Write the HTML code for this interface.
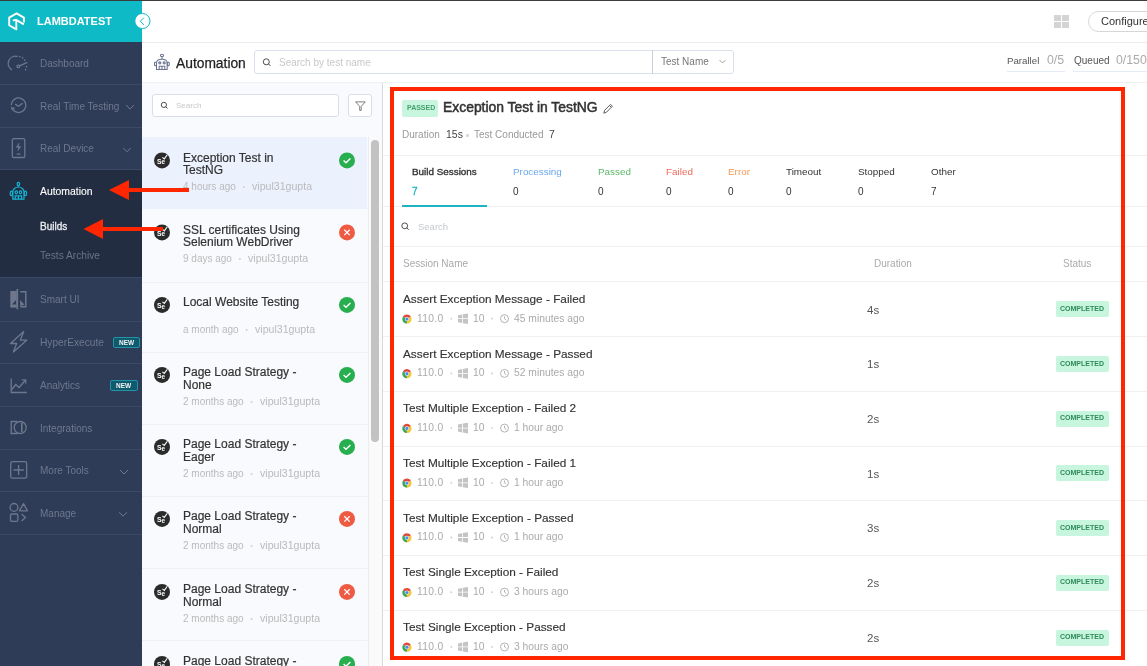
<!DOCTYPE html><html><head><meta charset="utf-8"><style>
html,body{margin:0;padding:0;}
body{width:1147px;height:666px;overflow:hidden;position:relative;background:#fff;font-family:"Liberation Sans", sans-serif;}
.t{position:absolute;white-space:nowrap;line-height:1;}
svg{position:absolute;left:0;top:0;}
body>div{will-change:transform;}
</style></head><body>
<div style="position:absolute;left:0px;top:0px;width:1147px;height:1px;background:#3c3c3c"></div><div style="position:absolute;left:0px;top:1px;width:142px;height:41px;background:#0ebac5"></div><div style="position:absolute;left:0px;top:42px;width:142px;height:624px;background:#2f3c58"></div><div style="position:absolute;left:0px;top:169px;width:142px;height:109px;background:#222d41"></div><div style="position:absolute;left:0px;top:84px;width:142px;height:1px;background:#3d4966"></div><div style="position:absolute;left:0px;top:127px;width:142px;height:1px;background:#3d4966"></div><div style="position:absolute;left:0px;top:169px;width:142px;height:1px;background:#3d4966"></div><div style="position:absolute;left:0px;top:277px;width:142px;height:1px;background:#3d4966"></div><div style="position:absolute;left:0px;top:321px;width:142px;height:1px;background:#3d4966"></div><div style="position:absolute;left:0px;top:363px;width:142px;height:1px;background:#3d4966"></div><div style="position:absolute;left:0px;top:406px;width:142px;height:1px;background:#3d4966"></div><div style="position:absolute;left:0px;top:449px;width:142px;height:1px;background:#3d4966"></div><div style="position:absolute;left:0px;top:491px;width:142px;height:1px;background:#3d4966"></div><div style="position:absolute;left:0px;top:534px;width:142px;height:1px;background:#3d4966"></div><div style="position:absolute;left:142px;top:42px;width:1005px;height:1px;background:#ececec"></div><div style="position:absolute;left:142px;top:82px;width:1005px;height:1px;background:#eef0f4"></div><div style="position:absolute;left:142px;top:83px;width:240px;height:583px;background:#f9fafd"></div><div style="position:absolute;left:382px;top:83px;width:1px;height:583px;background:#d5d8dc"></div><div class="t" style="left:37px;top:16px;font-size:11px;color:#fff;font-weight:bold;">LAMBDATEST</div><div class="t" style="left:40px;top:59px;font-size:10px;color:#6e778c;font-weight:normal;">Dashboard</div><div class="t" style="left:40px;top:102px;font-size:10px;color:#6e778c;font-weight:normal;">Real Time Testing</div><div class="t" style="left:40px;top:144px;font-size:10px;color:#6e778c;font-weight:normal;">Real Device</div><div class="t" style="left:40px;top:187px;font-size:10.4px;color:#ffffff;font-weight:normal;-webkit-text-stroke:0.1px #fff">Automation</div><div class="t" style="left:39.8px;top:222px;font-size:10px;color:#ebedf0;font-weight:normal;-webkit-text-stroke:0.3px #ebedf0">Builds</div><div class="t" style="left:39.8px;top:251px;font-size:10.2px;color:#6a7386;font-weight:normal;">Tests Archive</div><div class="t" style="left:40px;top:295px;font-size:10px;color:#6e778c;font-weight:normal;">Smart UI</div><div class="t" style="left:40px;top:338px;font-size:10.2px;color:#6e778c;font-weight:normal;">HyperExecute</div><div class="t" style="left:40px;top:381px;font-size:10px;color:#6e778c;font-weight:normal;">Analytics</div><div class="t" style="left:40px;top:424px;font-size:10px;color:#6e778c;font-weight:normal;">Integrations</div><div class="t" style="left:40px;top:466px;font-size:10px;color:#6e778c;font-weight:normal;">More Tools</div><div class="t" style="left:40px;top:509px;font-size:10px;color:#6e778c;font-weight:normal;">Manage</div><div style="position:absolute;left:113px;top:337px;width:27px;height:10.7px;background:#0f5a6d;border:1px solid #2393a5;box-sizing:border-box;border-radius:2px"></div><div class="t" style="left:118.6px;top:340px;font-size:6.5px;color:#f2f4f6;font-weight:bold;">NEW</div><div style="position:absolute;left:110px;top:380px;width:28px;height:10.7px;background:#0f5a6d;border:1px solid #2393a5;box-sizing:border-box;border-radius:2px"></div><div class="t" style="left:116.1px;top:383px;font-size:6.5px;color:#f2f4f6;font-weight:bold;">NEW</div><div style="position:absolute;left:1054px;top:15px;width:6.5px;height:6px;background:#d4d4d4"></div><div style="position:absolute;left:1061.5px;top:15px;width:6.5px;height:6px;background:#d4d4d4"></div><div style="position:absolute;left:1054px;top:22px;width:6.5px;height:6px;background:#d4d4d4"></div><div style="position:absolute;left:1061.5px;top:22px;width:6.5px;height:6px;background:#d4d4d4"></div><div style="position:absolute;left:1088px;top:11px;width:80px;height:21px;border:1px solid #d6d6d6;border-radius:11px;box-sizing:border-box;background:#fff"></div><div class="t" style="left:1101px;top:16px;font-size:11px;color:#333;font-weight:normal;">Configure</div><div class="t" style="left:175.5px;top:57px;font-size:13.8px;color:#222;font-weight:normal;-webkit-text-stroke:0.25px #222">Automation</div><div style="position:absolute;left:254px;top:50px;width:480px;height:24px;border:1px solid #d9dfeb;border-radius:3px;box-sizing:border-box;background:#fff"></div><div style="position:absolute;left:652px;top:50px;width:1px;height:24px;background:#c9ced8"></div><div class="t" style="left:278.8px;top:58px;font-size:10px;color:#c8c8c8;font-weight:normal;">Search by test name</div><div class="t" style="left:661.4px;top:57px;font-size:10px;color:#777;font-weight:normal;">Test Name</div><div class="t" style="left:1007.4px;top:56px;font-size:9.7px;color:#555;font-weight:normal;">Parallel</div><div class="t" style="left:1047.4px;top:54px;font-size:12.3px;color:#aaa;font-weight:normal;">0/5</div><div style="position:absolute;left:1007px;top:70.5px;width:58px;height:1px;background:#e6ebf8"></div><div class="t" style="left:1073.7px;top:56px;font-size:10px;color:#555;font-weight:normal;">Queued</div><div class="t" style="left:1116px;top:54px;font-size:12.3px;color:#aaa;font-weight:normal;">0/150</div><div style="position:absolute;left:1073px;top:70.5px;width:74px;height:1px;background:#e6ebf8"></div><div style="position:absolute;left:152px;top:94px;width:187px;height:23px;border:1px solid #d7dde9;border-radius:3px;box-sizing:border-box;background:#fff"></div><div class="t" style="left:175.7px;top:102px;font-size:8px;color:#c8c8c8;font-weight:normal;">Search</div><div style="position:absolute;left:348px;top:94px;width:24px;height:23px;border:1px solid #d7dde9;border-radius:3px;box-sizing:border-box;background:#fff"></div><div style="position:absolute;left:142px;top:137px;width:225px;height:71.5px;background:#ebf2fe"></div><div class="t" style="left:183.3px;top:152px;font-size:12px;color:#333;font-weight:normal;-webkit-text-stroke:0.2px #333">Exception Test in</div><div class="t" style="left:183.3px;top:164px;font-size:12px;color:#333;font-weight:normal;-webkit-text-stroke:0.2px #333">TestNG</div><div class="t" style="left:183.3px;top:182px;font-size:10px;color:#bababa;font-weight:normal;">4 hours ago</div><div class="t" style="left:252.10000000000002px;top:181px;font-size:10.6px;color:#bababa;font-weight:normal;">vipul31gupta</div><div style="position:absolute;left:142px;top:282px;width:225px;height:1px;background:#eef0f3"></div><div class="t" style="left:183.3px;top:224px;font-size:12px;color:#333;font-weight:normal;-webkit-text-stroke:0.2px #333">SSL certificates Using</div><div class="t" style="left:183.3px;top:236px;font-size:12px;color:#333;font-weight:normal;-webkit-text-stroke:0.2px #333">Selenium WebDriver</div><div class="t" style="left:183.3px;top:254px;font-size:10px;color:#bababa;font-weight:normal;">9 days ago</div><div class="t" style="left:248.20000000000002px;top:253px;font-size:10.6px;color:#bababa;font-weight:normal;">vipul31gupta</div><div style="position:absolute;left:142px;top:352px;width:225px;height:1px;background:#eef0f3"></div><div class="t" style="left:183.3px;top:296px;font-size:12px;color:#333;font-weight:normal;-webkit-text-stroke:0.2px #333">Local Website Testing</div><div class="t" style="left:183.3px;top:325px;font-size:10px;color:#bababa;font-weight:normal;">a month ago</div><div class="t" style="left:254.9px;top:324px;font-size:10.6px;color:#bababa;font-weight:normal;">vipul31gupta</div><div style="position:absolute;left:142px;top:424px;width:225px;height:1px;background:#eef0f3"></div><div class="t" style="left:183.3px;top:366px;font-size:12px;color:#333;font-weight:normal;-webkit-text-stroke:0.2px #333">Page Load Strategy -</div><div class="t" style="left:183.3px;top:379px;font-size:12px;color:#333;font-weight:normal;-webkit-text-stroke:0.2px #333">None</div><div class="t" style="left:183.3px;top:397px;font-size:10px;color:#bababa;font-weight:normal;">2 months ago</div><div class="t" style="left:259.9px;top:396px;font-size:10.6px;color:#bababa;font-weight:normal;">vipul31gupta</div><div style="position:absolute;left:142px;top:496px;width:225px;height:1px;background:#eef0f3"></div><div class="t" style="left:183.3px;top:438px;font-size:12px;color:#333;font-weight:normal;-webkit-text-stroke:0.2px #333">Page Load Strategy -</div><div class="t" style="left:183.3px;top:451px;font-size:12px;color:#333;font-weight:normal;-webkit-text-stroke:0.2px #333">Eager</div><div class="t" style="left:183.3px;top:469px;font-size:10px;color:#bababa;font-weight:normal;">2 months ago</div><div class="t" style="left:259.9px;top:468px;font-size:10.6px;color:#bababa;font-weight:normal;">vipul31gupta</div><div style="position:absolute;left:142px;top:568px;width:225px;height:1px;background:#eef0f3"></div><div class="t" style="left:183.3px;top:510px;font-size:12px;color:#333;font-weight:normal;-webkit-text-stroke:0.2px #333">Page Load Strategy -</div><div class="t" style="left:183.3px;top:523px;font-size:12px;color:#333;font-weight:normal;-webkit-text-stroke:0.2px #333">Normal</div><div class="t" style="left:183.3px;top:541px;font-size:10px;color:#bababa;font-weight:normal;">2 months ago</div><div class="t" style="left:259.9px;top:540px;font-size:10.6px;color:#bababa;font-weight:normal;">vipul31gupta</div><div style="position:absolute;left:142px;top:640px;width:225px;height:1px;background:#eef0f3"></div><div class="t" style="left:183.3px;top:583px;font-size:12px;color:#333;font-weight:normal;-webkit-text-stroke:0.2px #333">Page Load Strategy -</div><div class="t" style="left:183.3px;top:596px;font-size:12px;color:#333;font-weight:normal;-webkit-text-stroke:0.2px #333">Normal</div><div class="t" style="left:183.3px;top:614px;font-size:10px;color:#bababa;font-weight:normal;">2 months ago</div><div class="t" style="left:259.9px;top:613px;font-size:10.6px;color:#bababa;font-weight:normal;">vipul31gupta</div><div style="position:absolute;left:142px;top:713px;width:225px;height:1px;background:#eef0f3"></div><div class="t" style="left:183.3px;top:655px;font-size:12px;color:#333;font-weight:normal;-webkit-text-stroke:0.2px #333">Page Load Strategy -</div><div class="t" style="left:183.3px;top:668px;font-size:12px;color:#333;font-weight:normal;-webkit-text-stroke:0.2px #333">Normal</div><div class="t" style="left:183.3px;top:686px;font-size:10px;color:#bababa;font-weight:normal;">2 months ago</div><div class="t" style="left:259.9px;top:685px;font-size:10.6px;color:#bababa;font-weight:normal;">vipul31gupta</div><div style="position:absolute;left:368px;top:137px;width:14px;height:529px;background:#fafafa;border-left:1px solid #ececec;box-sizing:border-box"></div><div style="position:absolute;left:371px;top:140px;width:8px;height:302px;background:#c2c2c2;border-radius:4px"></div><div style="position:absolute;left:383px;top:155px;width:764px;height:1px;background:#eef0f4"></div><div style="position:absolute;left:383px;top:206px;width:764px;height:1px;background:#eef0f4"></div><div style="position:absolute;left:383px;top:246px;width:764px;height:1px;background:#eef0f4"></div><div style="position:absolute;left:383px;top:281px;width:764px;height:1px;background:#eef0f4"></div><div style="position:absolute;left:402px;top:100px;width:36px;height:16.5px;background:#c7f5dd;border-radius:2px"></div><div class="t" style="left:406.6px;top:104px;font-size:7px;color:#449f6c;font-weight:bold;">PASSED</div><div class="t" style="left:442.5px;top:101px;font-size:13.9px;color:#333;font-weight:normal;-webkit-text-stroke:0.5px #333">Exception Test in TestNG</div><div class="t" style="left:402px;top:130px;font-size:10px;color:#999;font-weight:normal;">Duration</div><div class="t" style="left:445.5px;top:129px;font-size:10.5px;color:#444;font-weight:normal;">15s</div><div style="position:absolute;left:465.5px;top:133.5px;width:3px;height:3px;background:#d6d8dc;border-radius:1px"></div><div class="t" style="left:473.5px;top:130px;font-size:10px;color:#999;font-weight:normal;">Test Conducted</div><div class="t" style="left:549px;top:129px;font-size:10.5px;color:#444;font-weight:normal;">7</div><div class="t" style="left:412px;top:167px;font-size:9.9px;color:#333;font-weight:normal;-webkit-text-stroke:0.35px #333">Build Sessions</div><div class="t" style="left:412px;top:187px;font-size:10px;color:#1fb4c4;font-weight:normal;-webkit-text-stroke:0.3px #1fb4c4">7</div><div class="t" style="left:512.6px;top:167px;font-size:9.9px;color:#6aa8ea;font-weight:normal;">Processing</div><div class="t" style="left:512.6px;top:187px;font-size:10px;color:#333;font-weight:normal;">0</div><div class="t" style="left:597.6px;top:167px;font-size:9.9px;color:#5cb86a;font-weight:normal;">Passed</div><div class="t" style="left:597.6px;top:187px;font-size:10px;color:#333;font-weight:normal;">0</div><div class="t" style="left:665.8px;top:167px;font-size:9.9px;color:#ef6b5c;font-weight:normal;">Failed</div><div class="t" style="left:665.8px;top:187px;font-size:10px;color:#333;font-weight:normal;">0</div><div class="t" style="left:728.3px;top:167px;font-size:9.9px;color:#f39a58;font-weight:normal;">Error</div><div class="t" style="left:728.3px;top:187px;font-size:10px;color:#333;font-weight:normal;">0</div><div class="t" style="left:785.8px;top:167px;font-size:9.9px;color:#333;font-weight:normal;">Timeout</div><div class="t" style="left:785.8px;top:187px;font-size:10px;color:#333;font-weight:normal;">0</div><div class="t" style="left:857.8px;top:167px;font-size:9.9px;color:#333;font-weight:normal;">Stopped</div><div class="t" style="left:857.8px;top:187px;font-size:10px;color:#333;font-weight:normal;">0</div><div class="t" style="left:931.3px;top:167px;font-size:9.9px;color:#333;font-weight:normal;">Other</div><div class="t" style="left:931.3px;top:187px;font-size:10px;color:#333;font-weight:normal;">7</div><div style="position:absolute;left:402px;top:205px;width:85px;height:2px;background:#1fb4c4"></div><div class="t" style="left:417.6px;top:222px;font-size:9.5px;color:#c5c8ce;font-weight:normal;">Search</div><div class="t" style="left:402.8px;top:259px;font-size:10px;color:#aaa;font-weight:normal;">Session Name</div><div class="t" style="left:874.4px;top:259px;font-size:10px;color:#aaa;font-weight:normal;">Duration</div><div class="t" style="left:1062.9px;top:259px;font-size:10px;color:#aaa;font-weight:normal;">Status</div><div class="t" style="left:402.5px;top:294px;font-size:11.8px;color:#333;font-weight:normal;-webkit-text-stroke:0.15px #333">Assert Exception Message - Failed</div><div class="t" style="left:416.7px;top:314px;font-size:10.3px;color:#aaa;font-weight:normal;letter-spacing:0.3px">110.0</div><div class="t" style="left:472.7px;top:314px;font-size:10.3px;color:#aaa;font-weight:normal;">10</div><div class="t" style="left:513.6px;top:314px;font-size:10.3px;color:#aaa;font-weight:normal;">45 minutes ago</div><div class="t" style="left:866.6px;top:305px;font-size:11.5px;color:#555;font-weight:normal;">4s</div><div style="position:absolute;left:1056.3px;top:301.3px;width:52.5px;height:16px;background:#c7f5dd;border-radius:2px"></div><div class="t" style="left:1060.3px;top:305px;font-size:7px;color:#2e8a5a;font-weight:bold;">COMPLETED</div><div style="position:absolute;left:383px;top:336px;width:764px;height:1px;background:#eef0f4"></div><div class="t" style="left:402.5px;top:349px;font-size:11.8px;color:#333;font-weight:normal;-webkit-text-stroke:0.15px #333">Assert Exception Message - Passed</div><div class="t" style="left:416.7px;top:368px;font-size:10.3px;color:#aaa;font-weight:normal;letter-spacing:0.3px">110.0</div><div class="t" style="left:472.7px;top:368px;font-size:10.3px;color:#aaa;font-weight:normal;">10</div><div class="t" style="left:513.6px;top:368px;font-size:10.3px;color:#aaa;font-weight:normal;">52 minutes ago</div><div class="t" style="left:866.6px;top:359px;font-size:11.5px;color:#555;font-weight:normal;">1s</div><div style="position:absolute;left:1056.3px;top:356.0px;width:52.5px;height:16px;background:#c7f5dd;border-radius:2px"></div><div class="t" style="left:1060.3px;top:360px;font-size:7px;color:#2e8a5a;font-weight:bold;">COMPLETED</div><div style="position:absolute;left:383px;top:391px;width:764px;height:1px;background:#eef0f4"></div><div class="t" style="left:402.5px;top:403px;font-size:11.8px;color:#333;font-weight:normal;-webkit-text-stroke:0.15px #333">Test Multiple Exception - Failed 2</div><div class="t" style="left:416.7px;top:423px;font-size:10.3px;color:#aaa;font-weight:normal;letter-spacing:0.3px">110.0</div><div class="t" style="left:472.7px;top:423px;font-size:10.3px;color:#aaa;font-weight:normal;">10</div><div class="t" style="left:513.6px;top:423px;font-size:10.3px;color:#aaa;font-weight:normal;">1 hour ago</div><div class="t" style="left:866.6px;top:414px;font-size:11.5px;color:#555;font-weight:normal;">2s</div><div style="position:absolute;left:1056.3px;top:410.7px;width:52.5px;height:16px;background:#c7f5dd;border-radius:2px"></div><div class="t" style="left:1060.3px;top:414px;font-size:7px;color:#2e8a5a;font-weight:bold;">COMPLETED</div><div style="position:absolute;left:383px;top:446px;width:764px;height:1px;background:#eef0f4"></div><div class="t" style="left:402.5px;top:458px;font-size:11.8px;color:#333;font-weight:normal;-webkit-text-stroke:0.15px #333">Test Multiple Exception - Failed 1</div><div class="t" style="left:416.7px;top:478px;font-size:10.3px;color:#aaa;font-weight:normal;letter-spacing:0.3px">110.0</div><div class="t" style="left:472.7px;top:478px;font-size:10.3px;color:#aaa;font-weight:normal;">10</div><div class="t" style="left:513.6px;top:478px;font-size:10.3px;color:#aaa;font-weight:normal;">1 hour ago</div><div class="t" style="left:866.6px;top:469px;font-size:11.5px;color:#555;font-weight:normal;">1s</div><div style="position:absolute;left:1056.3px;top:465.40000000000003px;width:52.5px;height:16px;background:#c7f5dd;border-radius:2px"></div><div class="t" style="left:1060.3px;top:469px;font-size:7px;color:#2e8a5a;font-weight:bold;">COMPLETED</div><div style="position:absolute;left:383px;top:500px;width:764px;height:1px;background:#eef0f4"></div><div class="t" style="left:402.5px;top:513px;font-size:11.8px;color:#333;font-weight:normal;-webkit-text-stroke:0.15px #333">Test Multiple Exception - Passed</div><div class="t" style="left:416.7px;top:532px;font-size:10.3px;color:#aaa;font-weight:normal;letter-spacing:0.3px">110.0</div><div class="t" style="left:472.7px;top:532px;font-size:10.3px;color:#aaa;font-weight:normal;">10</div><div class="t" style="left:513.6px;top:532px;font-size:10.3px;color:#aaa;font-weight:normal;">1 hour ago</div><div class="t" style="left:866.6px;top:523px;font-size:11.5px;color:#555;font-weight:normal;">3s</div><div style="position:absolute;left:1056.3px;top:520.1px;width:52.5px;height:16px;background:#c7f5dd;border-radius:2px"></div><div class="t" style="left:1060.3px;top:524px;font-size:7px;color:#2e8a5a;font-weight:bold;">COMPLETED</div><div style="position:absolute;left:383px;top:555px;width:764px;height:1px;background:#eef0f4"></div><div class="t" style="left:402.5px;top:567px;font-size:11.8px;color:#333;font-weight:normal;-webkit-text-stroke:0.15px #333">Test Single Exception - Failed</div><div class="t" style="left:416.7px;top:587px;font-size:10.3px;color:#aaa;font-weight:normal;letter-spacing:0.3px">110.0</div><div class="t" style="left:472.7px;top:587px;font-size:10.3px;color:#aaa;font-weight:normal;">10</div><div class="t" style="left:513.6px;top:587px;font-size:10.3px;color:#aaa;font-weight:normal;">3 hours ago</div><div class="t" style="left:866.6px;top:578px;font-size:11.5px;color:#555;font-weight:normal;">2s</div><div style="position:absolute;left:1056.3px;top:574.8px;width:52.5px;height:16px;background:#c7f5dd;border-radius:2px"></div><div class="t" style="left:1060.3px;top:578px;font-size:7px;color:#2e8a5a;font-weight:bold;">COMPLETED</div><div style="position:absolute;left:383px;top:610px;width:764px;height:1px;background:#eef0f4"></div><div class="t" style="left:402.5px;top:622px;font-size:11.8px;color:#333;font-weight:normal;-webkit-text-stroke:0.15px #333">Test Single Exception - Passed</div><div class="t" style="left:416.7px;top:642px;font-size:10.3px;color:#aaa;font-weight:normal;letter-spacing:0.3px">110.0</div><div class="t" style="left:472.7px;top:642px;font-size:10.3px;color:#aaa;font-weight:normal;">10</div><div class="t" style="left:513.6px;top:642px;font-size:10.3px;color:#aaa;font-weight:normal;">3 hours ago</div><div class="t" style="left:866.6px;top:633px;font-size:11.5px;color:#555;font-weight:normal;">2s</div><div style="position:absolute;left:1056.3px;top:629.5px;width:52.5px;height:16px;background:#c7f5dd;border-radius:2px"></div><div class="t" style="left:1060.3px;top:633px;font-size:7px;color:#2e8a5a;font-weight:bold;">COMPLETED</div>
<svg width="1147" height="666" viewBox="0 0 1147 666"><g fill="none" stroke="#fff" stroke-width="1.9" stroke-linejoin="miter"><path d="M15.4 28.8 L9.2 25.3 L9.2 17.6 L16.6 13.4 L23.9 17.6 L23.9 22.4"/><path d="M12.8 20.6 L16 19.7 L23.8 24.4"/><path d="M16.3 20.2 L16.3 30.2"/></g><circle cx="142.4" cy="21" r="7.6" fill="#fff" stroke="#0ebac5" stroke-width="1"/><path d="M143.9 17.7 L140.3 21.3 L143.9 24.8" fill="none" stroke="#0ebac5" stroke-width="1"/><path d="M126.2 105 L130.0 109.2 L133.8 105" fill="none" stroke="#6e778c" stroke-width="1"/><path d="M123.3 148 L127.0 151.8 L130.7 148" fill="none" stroke="#6e778c" stroke-width="1"/><path d="M120 470 L124.0 474 L128 470" fill="none" stroke="#6e778c" stroke-width="1"/><path d="M119 512.3 L123.0 516.2 L127 512.3" fill="none" stroke="#6e778c" stroke-width="1"/><g fill="none" stroke="#6e778c" stroke-width="1.3" stroke-linecap="round"><path d="M11.5 69.6 A7.3 7.3 0 0 1 17.2 56.4"/><circle cx="18.3" cy="66.4" r="1.3"/><path d="M19.5 65.8 L26.8 62.6"/><path d="M19.8 56.6 L20 56.8 M22.6 57.8 L22.7 57.9 M24.6 60.1 L24.7 60.2 M26.5 66.5 L26.6 66.6 M25.5 69.5 L25.6 69.6" stroke-width="1.5"/><path d="M11.3 104.5 A7.3 7.3 0 1 1 13.6 110.6"/><path d="M11.6 107.6 L12.6 109.4 L14 108.2" stroke-width="1.6"/><path d="M15.6 104.4 L18.5 106.2 L22.3 103.5"/><rect x="12.3" y="138.6" width="12.5" height="18.9" rx="1.6"/><path d="M18.9 143.5 L16.3 147.3 L18.6 147.3 L18 150.6 L20.8 146.6 L18.5 146.6 Z" fill="#6e778c" stroke-width="0.6"/><path d="M17.3 154.1 L19.9 154.1" stroke-width="1.4"/></g><g fill="none" stroke="#14b4d4" stroke-width="1.2"><ellipse cx="18.4" cy="184" rx="1.3" ry="1.6"/><path d="M18.4 185.6 L18.4 187"/><path d="M12.8 199.2 L12.8 192 A5.6 5 0 0 1 24 192 L24 199.2 Z"/><rect x="10.3" y="191.2" width="2.2" height="4.4" rx="1"/><rect x="24.3" y="191.2" width="2.2" height="4.4" rx="1"/><ellipse cx="16.3" cy="192.3" rx="1.2" ry="1.5"/><ellipse cx="20.5" cy="192.3" rx="1.2" ry="1.5"/><path d="M15.2 199.2 L15.2 195.8 L21.6 195.8 L21.6 199.2 M18.4 195.8 L18.4 199.2"/></g><g fill="#6e778c" stroke="none"><path d="M10.3 291 L16.8 291 L16.8 307.6 L10.3 307.6 Z"/><rect x="16.5" y="289" width="1.6" height="20.3"/></g><g fill="none" stroke="#6e778c" stroke-width="1.5"><path d="M20.3 291.8 L25.8 291.8 L25.8 306.8 L20.3 306.8"/></g><path d="M12 304.5 L16 300 L16 304.5 Z" fill="#2f3c58"/><path d="M20.2 300 L24.5 304.8 L20.2 306" fill="#6e778c"/><path d="M23.7 331.5 L10.5 343.5 L16.6 343.5 L13.4 352 L26.7 340.2 L20.3 340.2 Z" fill="none" stroke="#6e778c" stroke-width="1.3" stroke-linejoin="round"/><g fill="none" stroke="#6e778c" stroke-width="1.3"><path d="M11.2 378.5 L11.2 392.5 L26.9 392.5"/><path d="M11.8 389.5 L15.8 384.5 L19 387.5 L25.2 380.5"/><path d="M21.8 379.8 L25.7 379.8 L25.7 383.6"/></g><g fill="none" stroke="#6e778c" stroke-width="1.3"><path d="M17 421.5 L11.2 421.5 L11.2 433.5 L17.5 433.5"/><circle cx="20.2" cy="427.5" r="6"/><path d="M21.8 423 L21.8 432" stroke-width="1.6"/></g><g fill="none" stroke="#6e778c" stroke-width="1.3"><rect x="10.7" y="461.7" width="16" height="16.5" rx="1.8"/><path d="M18.6 465 L18.6 475 M13.5 470 L23.8 470"/></g><g fill="none" stroke="#6e778c" stroke-width="1.3"><circle cx="14" cy="507.4" r="3.9"/><path d="M23.5 503.6 L19.5 510.8 L27.5 510.8 Z" stroke-linejoin="round"/><rect x="10.5" y="514" width="7.3" height="7.3" rx="1.2"/><path d="M21.6 514 L25.5 517.5 L21.6 521"/></g><g fill="none" stroke="#6b7590" stroke-width="1.05"><ellipse cx="162" cy="55.4" rx="1.6" ry="1.1"/><path d="M162 56.5 L162 59"/><path d="M156.5 69.5 L156.5 63 Q156.5 59.3 162 59.3 Q167.2 59.3 167.2 63 L167.2 69.5 Z"/><rect x="154.5" y="62.3" width="2" height="3.3" rx=".6"/><rect x="167.2" y="62.3" width="2" height="3.3" rx=".6"/><circle cx="159.8" cy="62.8" r="1.1" fill="#b8bdc8"/><circle cx="164.2" cy="62.8" r="1.1" fill="#b8bdc8"/><path d="M159.2 69.5 L159.2 66.3 L164.8 66.3 L164.8 69.5 M162 66.3 L162 69.5"/></g><g fill="none" stroke="#444" stroke-width="0.95"><circle cx="266.3" cy="61.8" r="3"/><path d="M268.5 64 L270.5 66"/></g><path d="M719.5 60 L722.5 63 L725.5 60" fill="none" stroke="#999" stroke-width="0.9"/><g fill="none" stroke="#444" stroke-width="0.95"><circle cx="163.9" cy="104.9" r="2.6"/><path d="M165.8 106.8 L167.5 108.5"/></g><path d="M355.6 101.9 L365.3 101.9 L361.2 106.4 L361.2 110.4 L359.7 110.4 L359.7 106.4 Z" fill="none" stroke="#777" stroke-width="0.95" stroke-linejoin="round"/><circle cx="162" cy="160.4" r="8" fill="#2b2b2b"/><text x="157" y="163.6" font-family="Liberation Sans" font-weight="bold" font-size="6.8" fill="#fff">S</text><text x="161.6" y="164.1" font-family="Liberation Sans" font-weight="bold" font-size="6.3" fill="#fff">e</text><path d="M162.4 157.4 L164.3 158.9 L167.3 154.8" fill="none" stroke="#fff" stroke-width="1.1"/><circle cx="243.8" cy="187" r="1.1" fill="#cfd2d8"/><circle cx="347" cy="160.4" r="8" fill="#27ae4e"/><path d="M343.6 160.4 L346 162.8 L350.4 158.4" fill="none" stroke="#fff" stroke-width="1.4"/><circle cx="162" cy="232.4" r="8" fill="#2b2b2b"/><text x="157" y="235.6" font-family="Liberation Sans" font-weight="bold" font-size="6.8" fill="#fff">S</text><text x="161.6" y="236.1" font-family="Liberation Sans" font-weight="bold" font-size="6.3" fill="#fff">e</text><path d="M162.4 229.4 L164.3 230.9 L167.3 226.8" fill="none" stroke="#fff" stroke-width="1.1"/><circle cx="239.9" cy="259" r="1.1" fill="#cfd2d8"/><circle cx="347" cy="232.4" r="8" fill="#ef5a43"/><path d="M344.3 229.70000000000002 L349.7 235.1 M349.7 229.70000000000002 L344.3 235.1" fill="none" stroke="#fff" stroke-width="1.3"/><circle cx="162" cy="304.9" r="8" fill="#2b2b2b"/><text x="157" y="308.09999999999997" font-family="Liberation Sans" font-weight="bold" font-size="6.8" fill="#fff">S</text><text x="161.6" y="308.59999999999997" font-family="Liberation Sans" font-weight="bold" font-size="6.3" fill="#fff">e</text><path d="M162.4 301.9 L164.3 303.4 L167.3 299.29999999999995" fill="none" stroke="#fff" stroke-width="1.1"/><circle cx="246.6" cy="330" r="1.1" fill="#cfd2d8"/><circle cx="347" cy="304.9" r="8" fill="#27ae4e"/><path d="M343.6 304.9 L346 307.29999999999995 L350.4 302.9" fill="none" stroke="#fff" stroke-width="1.4"/><circle cx="162" cy="374.9" r="8" fill="#2b2b2b"/><text x="157" y="378.09999999999997" font-family="Liberation Sans" font-weight="bold" font-size="6.8" fill="#fff">S</text><text x="161.6" y="378.59999999999997" font-family="Liberation Sans" font-weight="bold" font-size="6.3" fill="#fff">e</text><path d="M162.4 371.9 L164.3 373.4 L167.3 369.29999999999995" fill="none" stroke="#fff" stroke-width="1.1"/><circle cx="251.6" cy="402" r="1.1" fill="#cfd2d8"/><circle cx="347" cy="374.9" r="8" fill="#27ae4e"/><path d="M343.6 374.9 L346 377.29999999999995 L350.4 372.9" fill="none" stroke="#fff" stroke-width="1.4"/><circle cx="162" cy="446.9" r="8" fill="#2b2b2b"/><text x="157" y="450.09999999999997" font-family="Liberation Sans" font-weight="bold" font-size="6.8" fill="#fff">S</text><text x="161.6" y="450.59999999999997" font-family="Liberation Sans" font-weight="bold" font-size="6.3" fill="#fff">e</text><path d="M162.4 443.9 L164.3 445.4 L167.3 441.29999999999995" fill="none" stroke="#fff" stroke-width="1.1"/><circle cx="251.6" cy="474" r="1.1" fill="#cfd2d8"/><circle cx="347" cy="446.9" r="8" fill="#27ae4e"/><path d="M343.6 446.9 L346 449.29999999999995 L350.4 444.9" fill="none" stroke="#fff" stroke-width="1.4"/><circle cx="162" cy="518.9" r="8" fill="#2b2b2b"/><text x="157" y="522.1" font-family="Liberation Sans" font-weight="bold" font-size="6.8" fill="#fff">S</text><text x="161.6" y="522.6" font-family="Liberation Sans" font-weight="bold" font-size="6.3" fill="#fff">e</text><path d="M162.4 515.9 L164.3 517.4 L167.3 513.3" fill="none" stroke="#fff" stroke-width="1.1"/><circle cx="251.6" cy="546" r="1.1" fill="#cfd2d8"/><circle cx="347" cy="518.9" r="8" fill="#ef5a43"/><path d="M344.3 516.1999999999999 L349.7 521.6 M349.7 516.1999999999999 L344.3 521.6" fill="none" stroke="#fff" stroke-width="1.3"/><circle cx="162" cy="591.9" r="8" fill="#2b2b2b"/><text x="157" y="595.1" font-family="Liberation Sans" font-weight="bold" font-size="6.8" fill="#fff">S</text><text x="161.6" y="595.6" font-family="Liberation Sans" font-weight="bold" font-size="6.3" fill="#fff">e</text><path d="M162.4 588.9 L164.3 590.4 L167.3 586.3" fill="none" stroke="#fff" stroke-width="1.1"/><circle cx="251.6" cy="619" r="1.1" fill="#cfd2d8"/><circle cx="347" cy="591.9" r="8" fill="#ef5a43"/><path d="M344.3 589.1999999999999 L349.7 594.6 M349.7 589.1999999999999 L344.3 594.6" fill="none" stroke="#fff" stroke-width="1.3"/><circle cx="162" cy="663.9" r="8" fill="#2b2b2b"/><text x="157" y="667.1" font-family="Liberation Sans" font-weight="bold" font-size="6.8" fill="#fff">S</text><text x="161.6" y="667.6" font-family="Liberation Sans" font-weight="bold" font-size="6.3" fill="#fff">e</text><path d="M162.4 660.9 L164.3 662.4 L167.3 658.3" fill="none" stroke="#fff" stroke-width="1.1"/><circle cx="251.6" cy="691" r="1.1" fill="#cfd2d8"/><circle cx="347" cy="663.9" r="8" fill="#27ae4e"/><path d="M343.6 663.9 L346 666.3 L350.4 661.9" fill="none" stroke="#fff" stroke-width="1.4"/><g fill="none" stroke="#555" stroke-width="0.95"><path d="M603.8 113.2 L604.6 110.3 L610.6 104.4 L612.4 106.2 L606.5 112.2 Z"/><path d="M609.5 105.5 L611.3 107.3"/></g><g fill="none" stroke="#444" stroke-width="0.95"><circle cx="404.7" cy="225.8" r="2.9"/><path d="M406.8 227.9 L408.7 229.8"/></g><g transform="translate(406.9,319.0)"><path d="M0 0 L-3.98 -2.30 A4.6 4.6 0 0 1 3.98 -2.30 Z" fill="#e04a3a"/><path d="M0 0 L3.98 -2.30 A4.6 4.6 0 0 1 0.00 4.60 Z" fill="#f5c631"/><path d="M0 0 L0.00 4.60 A4.6 4.6 0 0 1 -3.98 -2.30 Z" fill="#3aa757"/><circle r="2.1" fill="#fff"/><circle r="1.6" fill="#4a8af4"/></g><circle cx="451.3" cy="318.7" r="0.9" fill="#ccc"/><g fill="#c4c4c4"><path d="M458 315.2 L462 314.4 L462 318.3 L458 318.3 Z"/><path d="M462.8 314.2 L468 313.4 L468 318.3 L462.8 318.3 Z"/><path d="M458 319.09999999999997 L462 319.09999999999997 L462 323.0 L458 322.2 Z"/><path d="M462.8 319.09999999999997 L468 319.09999999999997 L468 324.0 L462.8 323.2 Z"/></g><circle cx="492" cy="318.7" r="0.9" fill="#ccc"/><g fill="none" stroke="#aaa" stroke-width="0.9"><circle cx="504.5" cy="318.7" r="4"/><path d="M504.5 316.4 L504.5 318.7 L506.3 320.2"/></g><g transform="translate(406.9,373.7)"><path d="M0 0 L-3.98 -2.30 A4.6 4.6 0 0 1 3.98 -2.30 Z" fill="#e04a3a"/><path d="M0 0 L3.98 -2.30 A4.6 4.6 0 0 1 0.00 4.60 Z" fill="#f5c631"/><path d="M0 0 L0.00 4.60 A4.6 4.6 0 0 1 -3.98 -2.30 Z" fill="#3aa757"/><circle r="2.1" fill="#fff"/><circle r="1.6" fill="#4a8af4"/></g><circle cx="451.3" cy="373.4" r="0.9" fill="#ccc"/><g fill="#c4c4c4"><path d="M458 369.9 L462 369.09999999999997 L462 373.0 L458 373.0 Z"/><path d="M462.8 368.9 L468 368.09999999999997 L468 373.0 L462.8 373.0 Z"/><path d="M458 373.79999999999995 L462 373.79999999999995 L462 377.7 L458 376.9 Z"/><path d="M462.8 373.79999999999995 L468 373.79999999999995 L468 378.7 L462.8 377.9 Z"/></g><circle cx="492" cy="373.4" r="0.9" fill="#ccc"/><g fill="none" stroke="#aaa" stroke-width="0.9"><circle cx="504.5" cy="373.4" r="4"/><path d="M504.5 371.09999999999997 L504.5 373.4 L506.3 374.9"/></g><g transform="translate(406.9,428.4)"><path d="M0 0 L-3.98 -2.30 A4.6 4.6 0 0 1 3.98 -2.30 Z" fill="#e04a3a"/><path d="M0 0 L3.98 -2.30 A4.6 4.6 0 0 1 0.00 4.60 Z" fill="#f5c631"/><path d="M0 0 L0.00 4.60 A4.6 4.6 0 0 1 -3.98 -2.30 Z" fill="#3aa757"/><circle r="2.1" fill="#fff"/><circle r="1.6" fill="#4a8af4"/></g><circle cx="451.3" cy="428.09999999999997" r="0.9" fill="#ccc"/><g fill="#c4c4c4"><path d="M458 424.59999999999997 L462 423.79999999999995 L462 427.7 L458 427.7 Z"/><path d="M462.8 423.59999999999997 L468 422.79999999999995 L468 427.7 L462.8 427.7 Z"/><path d="M458 428.49999999999994 L462 428.49999999999994 L462 432.4 L458 431.59999999999997 Z"/><path d="M462.8 428.49999999999994 L468 428.49999999999994 L468 433.4 L462.8 432.59999999999997 Z"/></g><circle cx="492" cy="428.09999999999997" r="0.9" fill="#ccc"/><g fill="none" stroke="#aaa" stroke-width="0.9"><circle cx="504.5" cy="428.09999999999997" r="4"/><path d="M504.5 425.79999999999995 L504.5 428.09999999999997 L506.3 429.59999999999997"/></g><g transform="translate(406.9,483.1)"><path d="M0 0 L-3.98 -2.30 A4.6 4.6 0 0 1 3.98 -2.30 Z" fill="#e04a3a"/><path d="M0 0 L3.98 -2.30 A4.6 4.6 0 0 1 0.00 4.60 Z" fill="#f5c631"/><path d="M0 0 L0.00 4.60 A4.6 4.6 0 0 1 -3.98 -2.30 Z" fill="#3aa757"/><circle r="2.1" fill="#fff"/><circle r="1.6" fill="#4a8af4"/></g><circle cx="451.3" cy="482.8" r="0.9" fill="#ccc"/><g fill="#c4c4c4"><path d="M458 479.3 L462 478.5 L462 482.40000000000003 L458 482.40000000000003 Z"/><path d="M462.8 478.3 L468 477.5 L468 482.40000000000003 L462.8 482.40000000000003 Z"/><path d="M458 483.2 L462 483.2 L462 487.1 L458 486.3 Z"/><path d="M462.8 483.2 L468 483.2 L468 488.1 L462.8 487.3 Z"/></g><circle cx="492" cy="482.8" r="0.9" fill="#ccc"/><g fill="none" stroke="#aaa" stroke-width="0.9"><circle cx="504.5" cy="482.8" r="4"/><path d="M504.5 480.5 L504.5 482.8 L506.3 484.3"/></g><g transform="translate(406.9,537.8)"><path d="M0 0 L-3.98 -2.30 A4.6 4.6 0 0 1 3.98 -2.30 Z" fill="#e04a3a"/><path d="M0 0 L3.98 -2.30 A4.6 4.6 0 0 1 0.00 4.60 Z" fill="#f5c631"/><path d="M0 0 L0.00 4.60 A4.6 4.6 0 0 1 -3.98 -2.30 Z" fill="#3aa757"/><circle r="2.1" fill="#fff"/><circle r="1.6" fill="#4a8af4"/></g><circle cx="451.3" cy="537.5" r="0.9" fill="#ccc"/><g fill="#c4c4c4"><path d="M458 534.0 L462 533.2 L462 537.1 L458 537.1 Z"/><path d="M462.8 533.0 L468 532.2 L468 537.1 L462.8 537.1 Z"/><path d="M458 537.9 L462 537.9 L462 541.8 L458 541.0 Z"/><path d="M462.8 537.9 L468 537.9 L468 542.8 L462.8 542.0 Z"/></g><circle cx="492" cy="537.5" r="0.9" fill="#ccc"/><g fill="none" stroke="#aaa" stroke-width="0.9"><circle cx="504.5" cy="537.5" r="4"/><path d="M504.5 535.2 L504.5 537.5 L506.3 539.0"/></g><g transform="translate(406.9,592.5)"><path d="M0 0 L-3.98 -2.30 A4.6 4.6 0 0 1 3.98 -2.30 Z" fill="#e04a3a"/><path d="M0 0 L3.98 -2.30 A4.6 4.6 0 0 1 0.00 4.60 Z" fill="#f5c631"/><path d="M0 0 L0.00 4.60 A4.6 4.6 0 0 1 -3.98 -2.30 Z" fill="#3aa757"/><circle r="2.1" fill="#fff"/><circle r="1.6" fill="#4a8af4"/></g><circle cx="451.3" cy="592.2" r="0.9" fill="#ccc"/><g fill="#c4c4c4"><path d="M458 588.7 L462 587.9000000000001 L462 591.8000000000001 L458 591.8000000000001 Z"/><path d="M462.8 587.7 L468 586.9000000000001 L468 591.8000000000001 L462.8 591.8000000000001 Z"/><path d="M458 592.6 L462 592.6 L462 596.5 L458 595.7 Z"/><path d="M462.8 592.6 L468 592.6 L468 597.5 L462.8 596.7 Z"/></g><circle cx="492" cy="592.2" r="0.9" fill="#ccc"/><g fill="none" stroke="#aaa" stroke-width="0.9"><circle cx="504.5" cy="592.2" r="4"/><path d="M504.5 589.9000000000001 L504.5 592.2 L506.3 593.7"/></g><g transform="translate(406.9,647.2)"><path d="M0 0 L-3.98 -2.30 A4.6 4.6 0 0 1 3.98 -2.30 Z" fill="#e04a3a"/><path d="M0 0 L3.98 -2.30 A4.6 4.6 0 0 1 0.00 4.60 Z" fill="#f5c631"/><path d="M0 0 L0.00 4.60 A4.6 4.6 0 0 1 -3.98 -2.30 Z" fill="#3aa757"/><circle r="2.1" fill="#fff"/><circle r="1.6" fill="#4a8af4"/></g><circle cx="451.3" cy="646.9000000000001" r="0.9" fill="#ccc"/><g fill="#c4c4c4"><path d="M458 643.4000000000001 L462 642.6000000000001 L462 646.5000000000001 L458 646.5000000000001 Z"/><path d="M462.8 642.4000000000001 L468 641.6000000000001 L468 646.5000000000001 L462.8 646.5000000000001 Z"/><path d="M458 647.3000000000001 L462 647.3000000000001 L462 651.2 L458 650.4000000000001 Z"/><path d="M462.8 647.3000000000001 L468 647.3000000000001 L468 652.2 L462.8 651.4000000000001 Z"/></g><circle cx="492" cy="646.9000000000001" r="0.9" fill="#ccc"/><g fill="none" stroke="#aaa" stroke-width="0.9"><circle cx="504.5" cy="646.9000000000001" r="4"/><path d="M504.5 644.6000000000001 L504.5 646.9000000000001 L506.3 648.4000000000001"/></g><rect x="392" y="89" width="731" height="569" fill="none" stroke="#ff2600" stroke-width="4"/><path d="M109 190 L129 180 L129 188 L189 188 L189 192 L129 192 L129 200 Z" fill="#ff2600"/><path d="M83.5 229 L103 219 L103 227 L163 227 L163 231 L103 231 L103 239 Z" fill="#ff2600"/></svg>
</body></html>
